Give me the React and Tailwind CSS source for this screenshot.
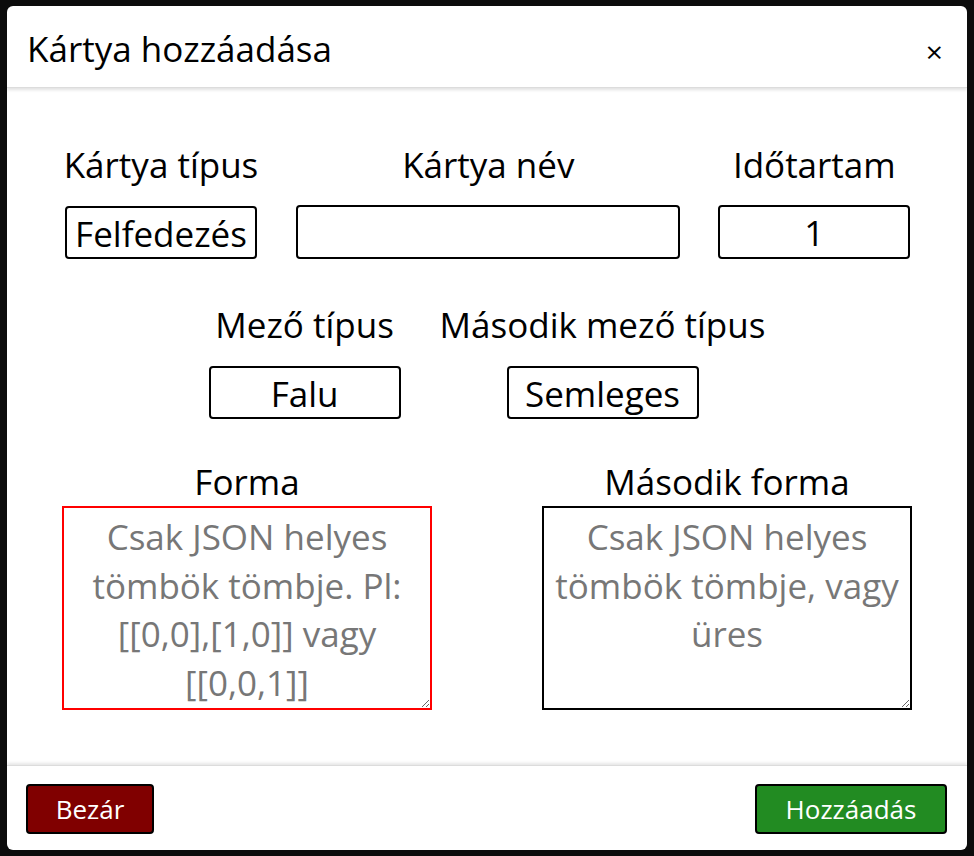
import { useState } from "react";

const font = "font-['Open_Sans','Noto_Sans',sans-serif]";

function Field({ label, children, labelClass = "" }) {
  return (
    <div className="flex flex-col items-center">
      <label className={`text-[35px] leading-[48px] text-black whitespace-nowrap ${labelClass}`}>{label}</label>
      {children}
    </div>
  );
}

export default function App() {
  const [cardType, setCardType] = useState("Felfedezés");
  const [name, setName] = useState("");
  const [duration, setDuration] = useState("1");
  const [fieldType, setFieldType] = useState("Falu");
  const [secondType, setSecondType] = useState("Semleges");
  const [shape, setShape] = useState("");
  const [secondShape, setSecondShape] = useState("");

  const boxCls =
    "h-[53px] border-2 border-black rounded-[4px] bg-white text-[35px] text-black text-center outline-none appearance-none [text-align-last:center]";

  return (
    <div className={`min-h-[856px] bg-[#0c0c0c] px-[7px] pt-[6px] pb-[6px] ${font}`}>
      <div className="h-[844px] bg-white rounded-[6px] flex flex-col overflow-hidden">
        {/* header */}
        <div className="h-[82px] flex items-center justify-between pl-[20px] pr-[24px] border-b border-[#dcdcdc] shadow-[0_2px_3px_rgba(0,0,0,0.12)]">
          <h2 className="text-[35px] text-black pt-[5px]">Kártya hozzáadása</h2>
          <button className="text-[30px] leading-none text-black pt-[10px]">×</button>
        </div>

        {/* body */}
        <div className="flex-1 flex flex-col pt-[53px]">
          <div className="flex justify-center gap-[38px]">
            <Field label="Kártya típus">
              <select
                value={cardType}
                onChange={e => setCardType(e.target.value)}
                className={`${boxCls} w-[192px] mt-[17px]`}
              >
                <option>Felfedezés</option>
                <option>Rajtaütés</option>
              </select>
            </Field>
            <Field label="Kártya név">
              <input
                value={name}
                onChange={e => setName(e.target.value)}
                className={`${boxCls} w-[384px] mt-[16px] h-[54px]`}
              />
            </Field>
            <Field label="Időtartam">
              <input
                value={duration}
                onChange={e => setDuration(e.target.value)}
                className={`${boxCls} w-[192px] mt-[16px] h-[54px]`}
              />
            </Field>
          </div>

          <div className="flex justify-center gap-[39px] mt-[42px]">
            <Field label="Mező típus">
              <select
                value={fieldType}
                onChange={e => setFieldType(e.target.value)}
                className={`${boxCls} w-[192px] mt-[17px] h-[51px]`}
              >
                <option>Falu</option>
                <option>Erdő</option>
                <option>Farm</option>
                <option>Víz</option>
              </select>
            </Field>
            <Field label="Második mező típus">
              <select
                value={secondType}
                onChange={e => setSecondType(e.target.value)}
                className={`${boxCls} w-[192px] mt-[17px] h-[51px]`}
              >
                <option>Semleges</option>
                <option>Falu</option>
                <option>Erdő</option>
              </select>
            </Field>
          </div>

          <div className="flex justify-center gap-[110px] mt-[39px]">
            <Field label="Forma" labelClass="leading-[45px]">
              <textarea
                value={shape}
                onChange={e => setShape(e.target.value)}
                placeholder={"Csak JSON helyes\ntömbök tömbje. Pl:\n[[0,0],[1,0]] vagy\n[[0,0,1]]"}
                className="w-[370px] h-[204px] border-2 border-[#f00] text-[35px] leading-[48.7px] text-center px-[2px] pt-[5px] pb-0 outline-none placeholder:text-[#777]"
              />
            </Field>
            <Field label="Második forma" labelClass="leading-[45px]">
              <textarea
                value={secondShape}
                onChange={e => setSecondShape(e.target.value)}
                placeholder={"Csak JSON helyes\ntömbök tömbje, vagy\nüres"}
                className="w-[370px] h-[204px] border-2 border-black text-[35px] leading-[48.7px] text-center px-[2px] pt-[5px] pb-0 outline-none placeholder:text-[#777]"
              />
            </Field>
          </div>
        </div>

        {/* footer */}
        <div className="h-[85px] flex items-start justify-between pt-[18px] pl-[19px] pr-[20px] border-t border-[#dcdcdc] shadow-[0_-2px_3px_rgba(0,0,0,0.10)]">
          <button className="w-[128px] h-[50px] bg-[#800000] border-2 border-black rounded-[4px] text-white text-[26px]">
            Bezár
          </button>
          <button className="w-[192px] h-[50px] bg-[#228b22] border-2 border-black rounded-[4px] text-white text-[26px]">
            Hozzáadás
          </button>
        </div>
      </div>
    </div>
  );
}
